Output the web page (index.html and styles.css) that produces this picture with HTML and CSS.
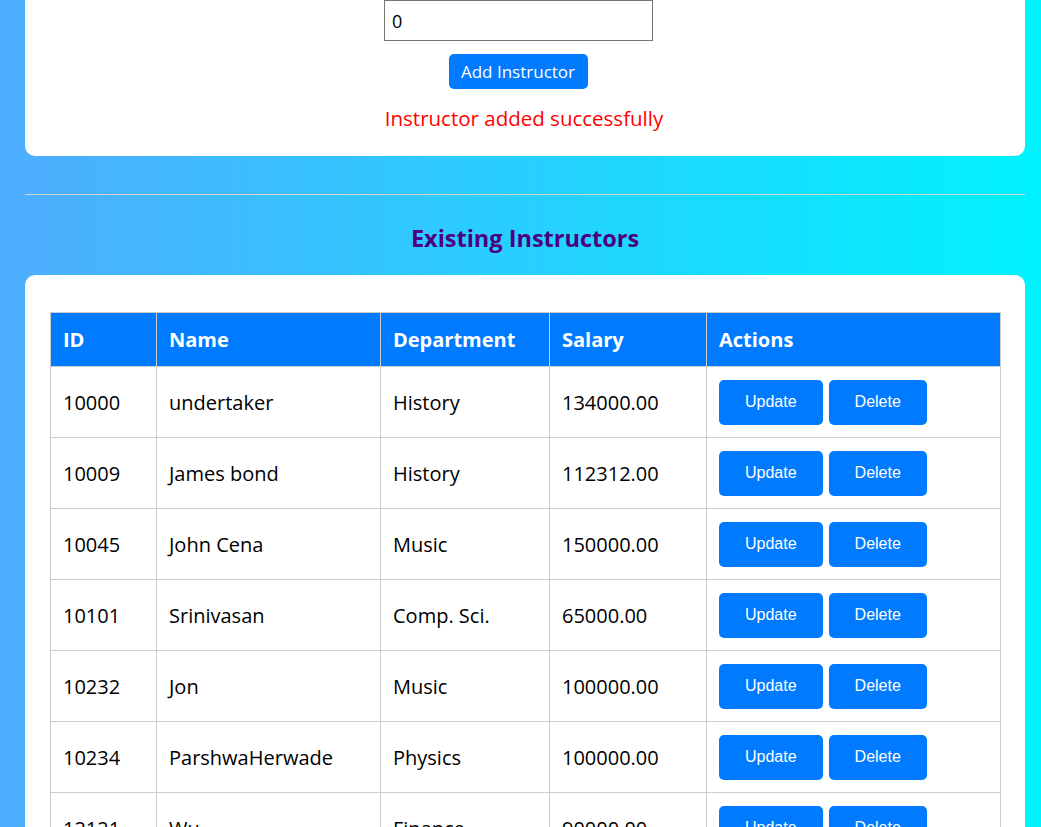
FILE: index.html
```html
<!DOCTYPE html>
<html lang="en">
<head>
<meta charset="utf-8">
<title>Instructors</title>
<link rel="stylesheet" href="styles.css">
</head>
<body>
<div class="page">
  <section class="card form-card">
    <input class="field" type="text" value="0">
    <button class="add-btn" type="button">Add Instructor</button>
    <p class="message">Instructor added successfully</p>
  </section>

  <hr class="divider">

  <h2 class="section-title">Existing Instructors</h2>

  <section class="card table-card">
    <table class="data-table">
      <colgroup>
        <col class="c-id"><col class="c-name"><col class="c-dept"><col class="c-sal"><col class="c-act">
      </colgroup>
      <thead>
        <tr><th>ID</th><th>Name</th><th>Department</th><th>Salary</th><th>Actions</th></tr>
      </thead>
      <tbody>
        <tr><td>10000</td><td>undertaker</td><td>History</td><td>134000.00</td><td><div class="actions"><button class="act-btn">Update</button><button class="act-btn">Delete</button></div></td></tr>
        <tr><td>10009</td><td>James bond</td><td>History</td><td>112312.00</td><td><div class="actions"><button class="act-btn">Update</button><button class="act-btn">Delete</button></div></td></tr>
        <tr><td>10045</td><td>John Cena</td><td>Music</td><td>150000.00</td><td><div class="actions"><button class="act-btn">Update</button><button class="act-btn">Delete</button></div></td></tr>
        <tr><td>10101</td><td>Srinivasan</td><td>Comp. Sci.</td><td>65000.00</td><td><div class="actions"><button class="act-btn">Update</button><button class="act-btn">Delete</button></div></td></tr>
        <tr><td>10232</td><td>Jon</td><td>Music</td><td>100000.00</td><td><div class="actions"><button class="act-btn">Update</button><button class="act-btn">Delete</button></div></td></tr>
        <tr><td>10234</td><td>ParshwaHerwade</td><td>Physics</td><td>100000.00</td><td><div class="actions"><button class="act-btn">Update</button><button class="act-btn">Delete</button></div></td></tr>
        <tr><td>12121</td><td>Wu</td><td>Finance</td><td>90000.00</td><td><div class="actions"><button class="act-btn">Update</button><button class="act-btn">Delete</button></div></td></tr>
        <tr><td>15151</td><td>Mozart</td><td>Music</td><td>40000.00</td><td><div class="actions"><button class="act-btn">Update</button><button class="act-btn">Delete</button></div></td></tr>
      </tbody>
    </table>
  </section>
</div>
</body>
</html>
```

FILE: styles.css
```css
* { box-sizing: border-box; }

html, body {
  margin: 0;
  padding: 0;
}

body {
  font-family: "Open Sans", "DejaVu Sans", sans-serif;
  background: linear-gradient(to right, #4facfe 0%, #00f2fe 100%);
  min-height: 100vh;
  color: #000;
}

.page {
  width: 1000px;
  margin-left: 25px;
  padding-bottom: 40px;
}

.card {
  background: #fff;
  border-radius: 10px;
}

.form-card {
  margin-top: -20px;
  padding: 20px 25px 24px;
  display: flex;
  flex-direction: column;
  align-items: center;
}

.field {
  display: block;
  width: 269px;
  height: 41px;
  margin: 0 0 0 -13px;
  padding: 0 7px;
  border: 1px solid #767676;
  font-family: "Open Sans", "DejaVu Sans", sans-serif;
  font-size: 18px;
  color: #000;
  background: #fff;
}

.add-btn {
  margin: 13px 0 0 -14px;
  height: 35px;
  width: 139px;
  padding: 0;
  border: 0;
  border-radius: 5px;
  background: #007bff;
  color: #fff;
  font-family: "Open Sans", "DejaVu Sans", sans-serif;
  font-size: 17px;
  cursor: pointer;
}

.message {
  margin: 15px 0 0 -2px;
  line-height: 28px;
  font-size: 20.5px;
  color: #ff0000;
}

.divider {
  margin: 38px 0 0;
  border: 0;
  height: 1px;
  background: #d4d4d4;
}

.section-title {
  margin: 28px 0 22px;
  line-height: 30px;
  font-size: 23.5px;
  font-weight: bold;
  text-align: center;
  color: #4b0082;
}

.table-card {
  padding: 37px 25px 25px;
}

.data-table {
  width: 950px;
  table-layout: fixed;
  border-collapse: collapse;
  font-size: 20px;
}

.c-id { width: 106px; }
.c-name { width: 224px; }
.c-dept { width: 169px; }
.c-sal { width: 157px; }
.c-act { width: 294px; }

.data-table th,
.data-table td {
  border: 1px solid #cccccc;
  padding: 0 12px;
  text-align: left;
  vertical-align: middle;
}

.data-table th {
  height: 54px;
  background: #007bff;
  color: #fff;
  font-weight: bold;
}

.data-table td {
  height: 71px;
  color: #000;
}

.actions {
  display: flex;
  gap: 6px;
}

.act-btn {
  height: 45px;
  padding: 0 26px;
  border: 0;
  border-radius: 5px;
  background: #007bff;
  color: #fff;
  font-family: "Liberation Sans", Arial, sans-serif;
  font-size: 16px;
  cursor: pointer;
}
```
